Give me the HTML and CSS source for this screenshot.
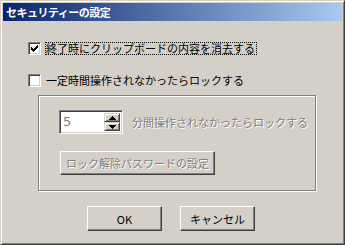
FILE: index.html
```html
<!DOCTYPE html>
<html lang="ja">
<head>
<meta charset="utf-8">
<title>セキュリティーの設定</title>
<link rel="stylesheet" href="styles.css">
</head>
<body>
<div class="window">
  <div class="titlebar"><span class="title">セキュリティーの設定</span></div>
  <div class="content">
    <label class="check-row first">
      <span class="checkbox"><svg width="7" height="7" viewBox="0 0 7 7"><path d="M0 2h1v3H0z M1 3h1v3H1z M2 4h1v3H2z M3 3h1v3H3z M4 2h1v3H4z M5 1h1v3H5z M6 0h1v3H6z" fill="#000"/></svg></span>
      <span class="check-label focus">終了時にクリップボードの内容を消去する</span>
    </label>
    <label class="check-row second">
      <span class="checkbox"></span>
      <span class="check-label">一定時間操作されなかったらロックする</span>
    </label>
    <div class="group">
      <div class="spin-row">
        <div class="spin">
          <span class="spin-value">5</span>
          <div class="spin-buttons">
            <span class="spin-btn"><svg width="7" height="4" viewBox="0 0 7 4"><path d="M3 0h1v1h1v1h1v1h1v1H0V3h1V2h1V1h1z" fill="#000"/></svg></span>
            <span class="spin-btn"><svg width="7" height="4" viewBox="0 0 7 4"><path d="M0 0h7v1H6v1H5v1H4v1H3V3H2V2H1V1H0z" fill="#000"/></svg></span>
          </div>
        </div>
        <span class="disabled-text">分間操作されなかったらロックする</span>
      </div>
      <button class="btn btn-wide" disabled><span class="disabled-text">ロック解除パスワードの設定</span></button>
    </div>
    <div class="actions">
      <button class="btn">OK</button>
      <button class="btn">キャンセル</button>
    </div>
  </div>
</div>
</body>
</html>
```
FILE: styles.css
```css
html, body {
  margin: 0;
  padding: 0;
  background: #d4d0c8;
}
body {
  font-family: "Noto Sans CJK JP", "Noto Sans", sans-serif;
  font-size: 11px;
  color: #000;
}
.window {
  width: 345px;
  height: 245px;
  box-sizing: border-box;
  border: 1px solid;
  border-color: #d4d0c8 #404040 #404040 #d4d0c8;
  box-shadow: inset 1px 1px #fff, inset -1px -1px #808080;
  padding: 2px;
  background: #d4d0c8;
  display: flex;
  flex-direction: column;
}
.titlebar {
  height: 18px;
  background: linear-gradient(to right, #0a246a, #a6caf0);
  display: flex;
  align-items: center;
  padding-left: 3px;
}
.title {
  color: #fff;
  font-weight: bold;
  font-size: 11px;
  line-height: 18px;
  letter-spacing: -0.5px;
}
.content {
  display: flex;
  flex-direction: column;
  align-items: flex-start;
}
.check-row {
  display: flex;
  align-items: center;
  height: 13px;
  margin-left: 25px;
  gap: 4px;
}
.check-row.first { margin-top: 21px; }
.check-row.second { margin-top: 19px; }
.checkbox {
  width: 13px;
  height: 13px;
  box-sizing: border-box;
  background: #fff;
  border: 1px solid;
  border-color: #808080 #fff #fff #808080;
  box-shadow: inset 1px 1px #404040, inset -1px -1px #d4d0c8;
  display: flex;
  align-items: center;
  justify-content: center;
  flex: none;
}
.checkbox svg { display: block; }
.check-label {
  line-height: 11px;
  height: 11px;
  padding: 0 1px 0 0;
  border: 1px solid transparent;
  white-space: nowrap;
}
.check-label.focus {
  border: 1px dotted #000;
}
.group {
  margin-top: 8px;
  margin-left: 35px;
  width: 278px;
  height: 96px;
  box-sizing: border-box;
  border: 1px solid #808080;
  box-shadow: inset 1px 1px #fff, 1px 1px #fff;
  padding: 14px 0 0 20px;
  display: flex;
  flex-direction: column;
  align-items: flex-start;
}
.spin-row {
  display: flex;
  align-items: center;
  gap: 9px;
}
.spin {
  width: 64px;
  height: 24px;
  box-sizing: border-box;
  background: #fff;
  border: 1px solid;
  border-color: #808080 #fff #fff #808080;
  box-shadow: inset 1px 1px #404040, inset -1px -1px #d4d0c8;
  padding: 2px 2px 2px 2px;
  display: flex;
  align-items: stretch;
  justify-content: space-between;
}
.spin-value {
  color: #808080;
  font-family: "DejaVu Sans", sans-serif;
  font-size: 13px;
  line-height: 18px;
  padding-left: 1px;
}
.spin-buttons {
  width: 16px;
  display: flex;
  flex-direction: column;
}
.spin-btn {
  flex: 1;
  background: #d4d0c8;
  box-sizing: border-box;
  border: 1px solid;
  border-color: #d4d0c8 #404040 #404040 #d4d0c8;
  box-shadow: inset 1px 1px #fff, inset -1px -1px #808080;
  display: flex;
  align-items: center;
  justify-content: center;
}
.spin-btn svg { display: block; }
.disabled-text {
  color: #808080;
  text-shadow: 1px 1px 0 #fff;
  white-space: nowrap;
}
.btn {
  font-family: inherit;
  font-size: 11px;
  color: #000;
  background: #d4d0c8;
  box-sizing: border-box;
  border: 1px solid;
  border-color: #fff #404040 #404040 #fff;
  box-shadow: inset -1px -1px #808080;
  padding: 0;
  margin: 0;
  width: 75px;
  height: 25px;
  display: flex;
  align-items: center;
  justify-content: center;
  border-radius: 0;
}
.btn-wide {
  width: 155px;
  height: 24px;
  margin-top: 17px;
  margin-left: 1px;
}
.actions {
  display: flex;
  gap: 18px;
  margin-top: 15px;
  padding-left: 84px;
}
```
